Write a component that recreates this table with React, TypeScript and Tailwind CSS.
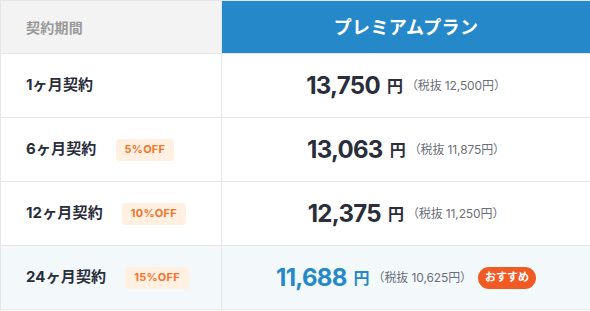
import React from 'react'

type Plan = {
  term: string
  off?: string
  price: string
  net: string
  featured?: boolean
}

const plans: Plan[] = [
  { term: '1ヶ月契約', price: '13,750', net: '12,500' },
  { term: '6ヶ月契約', off: '5%OFF', price: '13,063', net: '11,875' },
  { term: '12ヶ月契約', off: '10%OFF', price: '12,375', net: '11,250' },
  { term: '24ヶ月契約', off: '15%OFF', price: '11,688', net: '10,625', featured: true },
]

const font = { fontFamily: 'Inter, "Noto Sans CJK JP", sans-serif' }

export default function App() {
  return (
    <div className="w-[590px] h-[311px] bg-white" style={font}>
      <div className="grid grid-cols-[221px_369px] border-t border-l border-[#e6e6e6]">
        {/* Header */}
        <div className="h-[53px] flex items-center pl-[25px] bg-[#f3f3f3] border-r border-b border-[#e6e6e6]">
          <span className="text-[14px] font-bold text-[#9a9a9a] tracking-[0.02em]">契約期間</span>
        </div>
        <div className="h-[53px] flex items-center justify-center bg-[#2589c9] border-r border-b border-[#e6e6e6]">
          <span className="text-[18px] font-bold text-white tracking-[0.02em]">プレミアムプラン</span>
        </div>

        {plans.map((p) => {
          const bg = p.featured ? 'bg-[#f3f8fb]' : 'bg-white'
          const ink = p.featured ? 'text-[#2589c9]' : 'text-[#2a2e3a]'
          return (
            <React.Fragment key={p.term}>
              <div className={`h-[64px] flex items-center pl-[25px] border-r border-b border-[#e6e6e6] ${bg}`}>
                <span className="text-[15px] font-bold text-[#2a2e3a] tracking-[0.01em]">{p.term}</span>
                {p.off && (
                  <span className="ml-[19px] h-[22px] px-[9px] flex items-center rounded-[4px] bg-[#fff0e1] text-[11px] font-bold text-[#f4742b] tracking-[0.02em]">
                    {p.off}
                  </span>
                )}
              </div>
              <div className={`h-[64px] flex items-center justify-center border-r border-b border-[#e6e6e6] ${bg}`}>
                <span className={`text-[24px] font-bold tracking-[-0.03em] ${ink}`}>{p.price}</span>
                <span className={`ml-[7px] text-[16px] font-bold ${ink}`}>円</span>
                <span className="ml-[3px] text-[12px] text-[#6b6f78] tracking-[-0.01em]">（税抜 {p.net}円）</span>
                {p.featured && (
                  <span className="ml-[6px] h-[22px] px-[7px] flex items-center rounded-full bg-[#f05a24] text-[11px] font-bold text-white">
                    おすすめ
                  </span>
                )}
              </div>
            </React.Fragment>
          )
        })}
      </div>
    </div>
  )
}
